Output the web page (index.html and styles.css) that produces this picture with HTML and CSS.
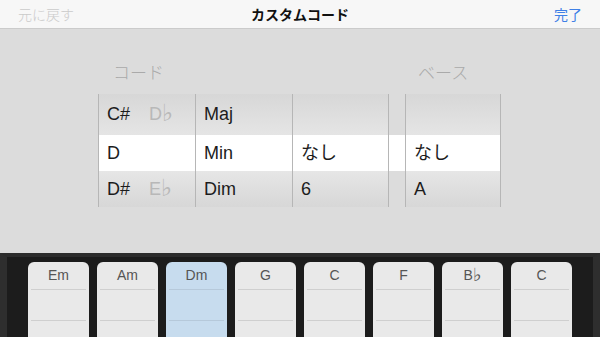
FILE: index.html
```html
<!DOCTYPE html>
<html lang="ja">
<head>
    <meta charset="UTF-8">
    <meta name="viewport" content="width=device-width, initial-scale=1.0">
    <title>カスタムコード</title>
    <link rel="stylesheet" href="styles.css">
</head>
<body>

    <!-- Navigation bar -->
    <div class="navbar">
        <span class="nav-left">元に戻す</span>
        <span class="nav-title">カスタムコード</span>
        <span class="nav-right">完了</span>
    </div>

    <!-- Picker section -->
    <div class="main">
        <div class="labels">
            <div class="label-chord">コード</div>
            <div class="label-bass">ベース</div>
        </div>

        <div class="picker">
            <div class="col">
                <div class="cell top">C# <span class="alt">D<span class="flat">♭</span></span></div>
                <div class="cell sel">D</div>
                <div class="cell bottom">D# <span class="alt">E<span class="flat">♭</span></span></div>
            </div>
            <div class="col">
                <div class="cell top">Maj</div>
                <div class="cell sel">Min</div>
                <div class="cell bottom">Dim</div>
            </div>
            <div class="col col-end">
                <div class="cell top"></div>
                <div class="cell sel">なし</div>
                <div class="cell bottom">6</div>
            </div>
            <div class="spacer">
                <div class="cell top"></div>
                <div class="cell sel"></div>
                <div class="cell bottom"></div>
            </div>
            <div class="col col-bass">
                <div class="cell top"></div>
                <div class="cell sel">なし</div>
                <div class="cell bottom">A</div>
            </div>
        </div>
    </div>

    <!-- Chord keys -->
    <div class="keyboard">
        <div class="keys">
            <div class="key"><div class="key-name">Em</div><div class="key-row"></div><div class="key-row"></div></div>
            <div class="key"><div class="key-name">Am</div><div class="key-row"></div><div class="key-row"></div></div>
            <div class="key active"><div class="key-name">Dm</div><div class="key-row"></div><div class="key-row"></div></div>
            <div class="key"><div class="key-name">G</div><div class="key-row"></div><div class="key-row"></div></div>
            <div class="key"><div class="key-name">C</div><div class="key-row"></div><div class="key-row"></div></div>
            <div class="key"><div class="key-name">F</div><div class="key-row"></div><div class="key-row"></div></div>
            <div class="key"><div class="key-name">B<span class="flat">♭</span></div><div class="key-row"></div><div class="key-row"></div></div>
            <div class="key"><div class="key-name">C</div><div class="key-row"></div><div class="key-row"></div></div>
        </div>
    </div>

</body>
</html>
```

FILE: styles.css
```css
body {
    margin: 0;
    width: 600px;
    height: 337px;
    overflow: hidden;
    font-family: "Liberation Sans", "Noto Sans CJK JP", sans-serif;
    background-color: #dcdcdc;
}
/* Navigation bar */
.navbar {
    display: flex;
    align-items: center;
    justify-content: space-between;
    height: 28px;
    padding: 0 18px;
    background-color: #f7f7f7;
    border-bottom: 1px solid #cbcbcb;
    font-size: 14px;
}
.nav-left {
    color: #cacaca;
    width: 80px;
    font-weight: 300;
}
.nav-title {
    font-weight: bold;
    color: #111;
}
.nav-right {
    color: #3f80e6;
    width: 80px;
    text-align: right;
}
/* Picker area */
.main {
    height: 224px;
    padding-top: 34px;
    box-sizing: border-box;
}
.labels {
    display: flex;
    margin-left: 98px;
    height: 22px;
    font-size: 17px;
    font-weight: 300;
    color: #aaa;
    line-height: 22px;
}
.label-chord {
    width: 291px;
    padding-left: 15px;
    box-sizing: border-box;
}
.label-bass {
    margin-left: 17px;
    width: 95px;
    padding-left: 12px;
    box-sizing: border-box;
}
.picker {
    display: flex;
    margin-left: 98px;
    margin-top: 9px;
}
.col {
    width: 97px;
    border-left: 1px solid #b6b6b6;
    box-sizing: border-box;
}
.col-end {
    border-right: 1px solid #b6b6b6;
}
.col-bass {
    width: 96px;
    border-right: 1px solid #b6b6b6;
}
.spacer {
    width: 16px;
}
.cell {
    padding-left: 8px;
    font-size: 18px;
    color: #1c1c1c;
    white-space: nowrap;
}
.cell.top {
    height: 41px;
    line-height: 41px;
    background: linear-gradient(to bottom, #d7d7d7, #e5e5e5);
}
.cell.sel {
    height: 36px;
    line-height: 36px;
    background-color: #fff;
}
.cell.bottom {
    height: 36px;
    line-height: 36px;
    background: linear-gradient(to top, #d7d7d7, #e6e6e6);
}
.spacer .cell.top,
.spacer .cell.bottom {
    background: #dcdcdc;
}
.alt {
    color: #b8b8b8;
    margin-left: 14px;
}
.flat {
    font-family: "DejaVu Sans", sans-serif;
    font-size: 1.3em;
    line-height: 1;
    vertical-align: -0.05em;
}
/* Chord keys */
.keyboard {
    height: 84px;
    background-color: #1c1c1c;
    border-top: 4px solid #2c2c2c;
    border-left: 7px solid #2e2e2e;
    border-right: 7px solid #2e2e2e;
    box-sizing: border-box;
    overflow: hidden;
}
.keys {
    display: flex;
    gap: 8px;
    padding-left: 21px;
    padding-top: 5px;
}
.key {
    width: 61px;
    height: 100px;
    flex-shrink: 0;
    background-color: #e9e9e9;
    border-radius: 6px 6px 0 0;
}
.key.active {
    background-color: #c7dcee;
}
.key-name {
    height: 27px;
    line-height: 26px;
    text-align: center;
    font-size: 14px;
    color: #555;
    border-bottom: 1px solid #cfcfcf;
    margin: 0 3px;
}
.key-row {
    height: 30px;
    border-bottom: 1px solid #cfcfcf;
    margin: 0 3px;
}
.key.active .key-name,
.key.active .key-row {
    border-bottom-color: #b6c9da;
}
```
